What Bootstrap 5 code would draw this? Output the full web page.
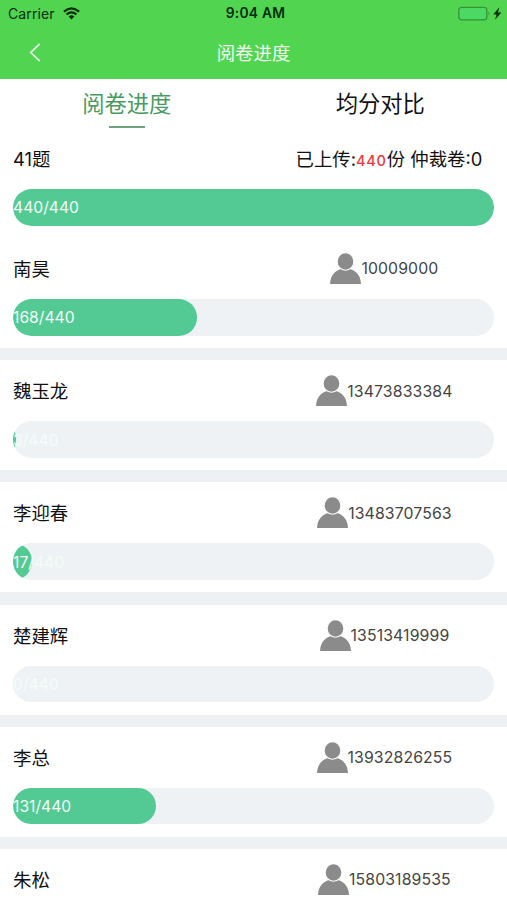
<!DOCTYPE html>
<html lang="zh-CN">
<head>
<meta charset="utf-8">
<meta name="viewport" content="width=device-width, initial-scale=1">
<title>阅卷进度</title>
<link href="https://cdn.jsdelivr.net/npm/bootstrap@5.3.0/dist/css/bootstrap.min.css" rel="stylesheet">
<style>
body{font-family:Inter,"Noto Sans CJK SC",sans-serif;height:900px;overflow:hidden;background:#fff;color:#111;line-height:1}
.topbar{background:#51d551;height:79px}
.status{height:27px;font-size:14px;color:#062c08;padding:0 5px 0 8px}
.carrier{letter-spacing:.1px}
.status-time{font-weight:600;font-size:13.8px;letter-spacing:.25px;top:7px}
.title-row{height:52px;color:#effdef;font-size:18.4px}
.back{left:29px;top:16px}
.tabs{height:49px;font-size:22.3px}
.tabs a{color:#111;padding-top:13.6px}
.tabs a.active{color:#489a62}
.tabs a.active::after{content:"";width:36px;height:2px;background:#6aa47c;margin-top:11px}
.entry{height:110px;padding:0 12.6px 0 13px}
.entry + .strip{height:12.2px;background:#eef1f4}
.entry:last-child{height:51px}
.entry-head{height:61px;font-size:18.4px;padding-top:1.6px}
.entry:last-child .entry-head{height:51px;padding-top:11.6px}
.entry-side{width:220px}
.entry-side svg{margin-top:-1.6px}
.phone{font-size:15.8px;letter-spacing:.12px;color:#444}
.totals{font-size:18.4px;padding-left:9px;white-space:pre}
.totals b{font-size:14.6px;font-weight:500;color:#f0383c;letter-spacing:.7px}
.meter{height:36.6px;border-radius:18.3px;background:#eef2f5}
.meter-fill{height:100%;min-width:36.6px;border-radius:18.3px;background:#53ca94;position:absolute;right:calc(100% - var(--v));width:var(--v)}
.meter-text{position:relative;font-size:15.7px;color:#f4fdf8;padding-top:1.8px}
</style>
</head>
<body>
<svg class="d-none"><symbol id="person" viewBox="0 0 31 31"><path d="M0 31C.3 21 7 15.500 15.500 15.500S30.700 21 31 31Z" fill="#8b8b8b"/><ellipse cx="15.500" cy="8.500" rx="8.400" ry="8.700" fill="#8b8b8b" stroke="#fff" stroke-width="1.100"/></symbol></svg>
<header class="topbar">
  <div class="status d-flex align-items-center justify-content-between position-relative">
    <div class="d-flex align-items-center"><span class="carrier">Carrier</span>
      <svg class="ms-2" width="17" height="13" viewBox="0 0 17 13" fill="none" stroke="#062c08" stroke-width="2.300"><path d="M.9 4.700Q8.500-2 16.100 4.700M3.500 7.500Q8.500 3.200 13.500 7.500"/><path d="M5.700 9.500Q8.500 7.200 11.300 9.500L8.500 12.400Z" fill="#062c08" stroke="none"/></svg>
    </div>
    <span class="status-time position-absolute start-50 translate-middle-x ps-1">9:04 AM</span>
    <svg width="44" height="15" viewBox="0 0 44 15"><rect x=".8" y="1.300" width="28" height="12.500" rx="2.800" fill="#4bd964" stroke="#39933b" stroke-width="1.300"/><path d="M30.400 5.500q2 2 0 4z" fill="#39933b"/><path d="M41.300 1.300L35.200 8.500H38.600L37 13.800L43.400 6.400H40Z" fill="#062c08"/></svg>
  </div>
  <div class="title-row d-flex align-items-center justify-content-center position-relative">
    <svg class="back position-absolute" width="12" height="19" viewBox="0 0 12 19" fill="none" stroke="#effdef" stroke-width="1.700"><path d="M10.700.8L1.700 9.500L10.700 18"/></svg>
    <span>阅卷进度</span>
  </div>
</header>
<nav class="tabs d-flex">
  <a class="active w-50 d-flex flex-column align-items-center text-decoration-none" href="#">阅卷进度</a>
  <a class="w-50 d-flex flex-column align-items-center text-decoration-none" href="#">均分对比</a>
</nav>
<main>
  <section class="entry">
    <div class="entry-head d-flex align-items-center justify-content-between"><span>41题</span><div class="entry-side totals d-flex align-items-baseline justify-content-center"><span>已上传:</span><b>440</b><span>份 仲裁卷:0</span></div></div>
    <div class="meter position-relative overflow-hidden d-flex align-items-center"><div class="meter-fill" style="--v:100%"></div><span class="meter-text">440/440</span></div>
  </section>
  <section class="entry">
    <div class="entry-head d-flex align-items-center justify-content-between"><span>南昊</span><div class="entry-side phone d-flex align-items-center justify-content-center"><svg width="31" height="31"><use href="#person"/></svg><span>10009000</span></div></div>
    <div class="meter position-relative overflow-hidden d-flex align-items-center"><div class="meter-fill" style="--v:38.18%"></div><span class="meter-text">168/440</span></div>
  </section>
  <div class="strip"></div>
  <section class="entry">
    <div class="entry-head d-flex align-items-center justify-content-between"><span>魏玉龙</span><div class="entry-side phone d-flex align-items-center justify-content-center"><svg width="31" height="31"><use href="#person"/></svg><span>13473833384</span></div></div>
    <div class="meter position-relative overflow-hidden d-flex align-items-center"><div class="meter-fill" style="--v:.68%"></div><span class="meter-text">3/440</span></div>
  </section>
  <div class="strip"></div>
  <section class="entry">
    <div class="entry-head d-flex align-items-center justify-content-between"><span>李迎春</span><div class="entry-side phone d-flex align-items-center justify-content-center"><svg width="31" height="31"><use href="#person"/></svg><span>13483707563</span></div></div>
    <div class="meter position-relative overflow-hidden d-flex align-items-center"><div class="meter-fill" style="--v:3.86%"></div><span class="meter-text">17/440</span></div>
  </section>
  <div class="strip"></div>
  <section class="entry">
    <div class="entry-head d-flex align-items-center justify-content-between"><span>楚建辉</span><div class="entry-side phone d-flex align-items-center justify-content-center"><svg width="31" height="31"><use href="#person"/></svg><span>13513419999</span></div></div>
    <div class="meter position-relative overflow-hidden d-flex align-items-center"><div class="meter-fill" style="--v:0%"></div><span class="meter-text">0/440</span></div>
  </section>
  <div class="strip"></div>
  <section class="entry">
    <div class="entry-head d-flex align-items-center justify-content-between"><span>李总</span><div class="entry-side phone d-flex align-items-center justify-content-center"><svg width="31" height="31"><use href="#person"/></svg><span>13932826255</span></div></div>
    <div class="meter position-relative overflow-hidden d-flex align-items-center"><div class="meter-fill" style="--v:29.77%"></div><span class="meter-text">131/440</span></div>
  </section>
  <div class="strip"></div>
  <section class="entry">
    <div class="entry-head d-flex align-items-center justify-content-between"><span>朱松</span><div class="entry-side phone d-flex align-items-center justify-content-center"><svg width="31" height="31"><use href="#person"/></svg><span>15803189535</span></div></div>
  </section>
</main>
<script src="https://cdn.jsdelivr.net/npm/bootstrap@5.3.0/dist/js/bootstrap.bundle.min.js"></script>
</body>
</html>
